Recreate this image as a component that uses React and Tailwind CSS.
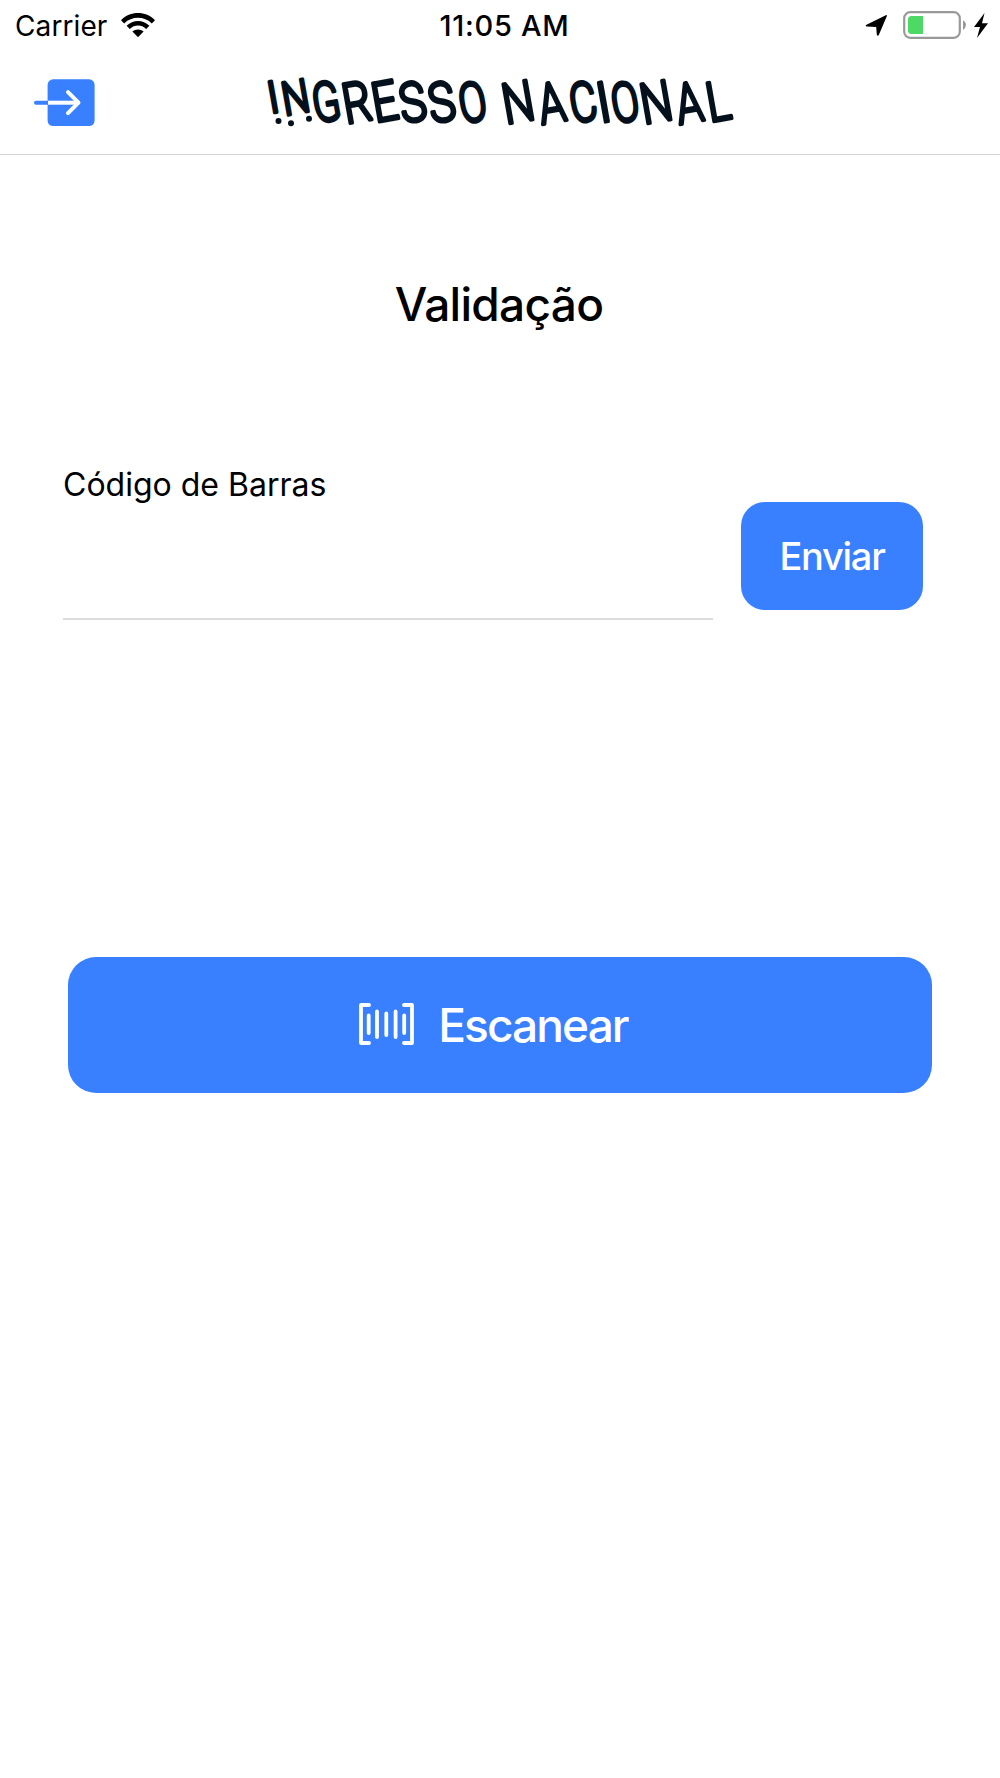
import React, { useState } from "react";

// Each letter of the wordmark leans back on its own centre
const wordmark = [
  { char: "I", x: 273, y: 97, scale: 0.9, size: 44 },
  { char: "N", x: 295.5, y: 97, scale: 0.84, size: 46 },
  { char: "G", x: 326, y: 101.5, scale: 0.74, size: 55 },
  { char: "R", x: 356.5, y: 102, scale: 0.8, size: 56 },
  { char: "E", x: 384.5, y: 101, scale: 0.82, size: 55 },
  { char: "S", x: 412.5, y: 102, scale: 0.82, size: 55 },
  { char: "S", x: 441.5, y: 102, scale: 0.82, size: 55 },
  { char: "O", x: 472.5, y: 102, scale: 0.74, size: 55 },
  { char: "N", x: 518, y: 102, scale: 0.8, size: 56 },
  { char: "A", x: 551.5, y: 102.5, scale: 0.76, size: 56 },
  { char: "C", x: 583, y: 102, scale: 0.76, size: 55 },
  { char: "I", x: 603.5, y: 102, scale: 0.9, size: 56 },
  { char: "O", x: 625, y: 102, scale: 0.74, size: 55 },
  { char: "N", x: 656, y: 102, scale: 0.8, size: 56 },
  { char: "A", x: 689, y: 102.5, scale: 0.76, size: 56 },
  { char: "L", x: 718, y: 101, scale: 0.82, size: 55 },
];

const Logo = () => (
  <svg
    className="h-[92px] w-[496px] shrink-0"
    viewBox="252 56 496 92"
    fill="#04101b"
    stroke="#04101b"
    aria-label="Ingresso Nacional"
  >
    {wordmark.map(({ char, x, y, scale, size }, index) => (
      <text
        key={index}
        transform={`translate(${x} ${y}) rotate(-10) scale(${scale} 1)`}
        y={size * 0.355}
        textAnchor="middle"
        fontFamily="Roboto, sans-serif"
        fontWeight="300"
        fontSize={size}
        strokeWidth="3.6"
        strokeLinejoin="round"
      >
        {char}
      </text>
    ))}
    <g stroke="none">
      <circle cx="278.5" cy="121" r="3" />
      <circle cx="291" cy="123.2" r="3" />
      <circle cx="309" cy="118.8" r="3" />
    </g>
  </svg>
);

const StatusBar = () => (
  <div className="flex h-[50px] items-center justify-between pl-[15px] pr-[12px]">
    <div className="flex w-[400px] items-center gap-[14px]">
      <span className="pt-px text-[28px] tracking-[0.1px]">Carrier</span>
      <svg className="mb-px h-[24px] w-[34px]" viewBox="0 0 34 24">
        <path d="M0 7.2 C9 -2.4 25 -2.4 34 7.2 L30.8 10.4 C23 3 11 3 3.2 10.4 Z" />
        <path d="M5.6 12.8 C12 6.3 22 6.3 28.4 12.8 L25.2 16 C20.5 11.4 13.5 11.4 8.8 16 Z" />
        <path d="M11.4 18.6 C14.4 15.8 19.6 15.8 22.6 18.6 L17 24.2 Z" />
      </svg>
    </div>
    <span className="pt-px pl-[6px] text-[29px] font-medium tracking-[0.7px]">11:05 AM</span>
    <div className="flex w-[400px] items-center justify-end">
      <svg className="h-[23px] w-[23px]" viewBox="0 0 23 23">
        <path d="M1.5 10.8 L20.8 1.2 Q22.3 .7 21.8 2.2 L13.8 21 Q12.6 22.7 11.8 20.8 L11.2 13 L2 12.6 Q-.3 12 1.5 10.8 Z" />
      </svg>
      <svg className="ml-[15px] h-[28px] w-[64px]" viewBox="0 0 64 28">
        <rect x="1.2" y="1.2" width="55.6" height="25.6" rx="6" fill="none" stroke="#999" strokeWidth="2.2" />
        <path d="M8.5 5 H20 V23 H8.5 Q5 23 5 19.5 V8.5 Q5 5 8.5 5 Z" fill="#4cd964" />
        <path d="M60 9 Q66 14 60 19 Z" fill="#999" />
      </svg>
      <svg className="ml-[7px] h-[25px] w-[14px]" viewBox="0 0 14 25">
        <path d="M10.5 0 L0 14 H6 L3 25 L14 10.2 H8 Z" />
      </svg>
    </div>
  </div>
);

const App = () => {
  const [code, setCode] = useState("");

  const handleSubmit = (e) => {
    e.preventDefault();
    setCode("");
  };

  return (
    <div className="min-h-[1778px] w-full bg-white font-['Inter',sans-serif] text-black">
      <StatusBar />

      {/* Header */}
      <header className="flex h-[105px] items-start border-b border-[#d3d3d3] pt-[6px] pl-[34px]">
        <button type="button" aria-label="Sair" className="mt-[23px] mr-[157px] h-[47px] w-[61px] shrink-0">
          <svg className="h-[47px] w-[61px]" viewBox="0 0 61 47" fill="none" strokeLinecap="round" strokeLinejoin="round">
            <path d="M2 23.7 H14" stroke="#3880ff" strokeWidth="4" />
            <rect x="13.6" y="0.3" width="47" height="46.7" rx="5.5" fill="#3880ff" />
            <path d="M14 23.7 H44" stroke="#fff" strokeWidth="4" strokeLinecap="butt" />
            <path d="M34 13.2 L44.5 23.7 L34 34.2" stroke="#fff" strokeWidth="4" />
          </svg>
        </button>
        <Logo />
      </header>

      <main className="flex flex-col">
        <h1 className="pt-[121px] pr-[2px] text-center text-[46px] leading-[56px] font-medium tracking-[-0.7px]">
          Validação
        </h1>

        {/* Barcode form */}
        <form onSubmit={handleSubmit} className="mt-[133px] flex items-start pl-[63px]">
          <div className="flex w-[650px] flex-col border-b-2 border-[#dcdcdc]">
            <label htmlFor="code" className="pt-px text-[32px] leading-[38px]">
              Código de Barras
            </label>
            <input
              id="code"
              type="text"
              value={code}
              onChange={(e) => setCode(e.target.value)}
              className="h-[114px] text-[31px] outline-none"
            />
          </div>
          <button
            type="submit"
            className="mt-[37px] ml-[28px] h-[108px] w-[182px] rounded-[24px] bg-[#3880ff] pt-px text-[38px] font-[450] tracking-[-1.3px] text-white"
          >
            Enviar
          </button>
        </form>

        {/* Scan */}
        <button
          type="button"
          className="mx-[68px] mt-[337px] flex h-[136px] items-center justify-center gap-[24px] rounded-[28px] bg-[#3880ff] pr-[13px] text-[46px] font-[460] tracking-[-1.9px] text-white"
        >
          <svg className="mb-[2px] h-[42px] w-[55px]" viewBox="0 0 55 42" fill="none" stroke="#fff" strokeWidth="3.8" strokeLinecap="round" strokeLinejoin="round">
            <path d="M10 2 H2 V40 H10" />
            <path d="M45 2 H53 V40 H45" />
            <path d="M9.7 12.5 V30 M18 8.5 V34 M27.3 10.5 V32 M36.6 8.5 V34 M45.2 12.5 V30" />
          </svg>
          <span>Escanear</span>
        </button>
      </main>
    </div>
  );
};

export default App;
